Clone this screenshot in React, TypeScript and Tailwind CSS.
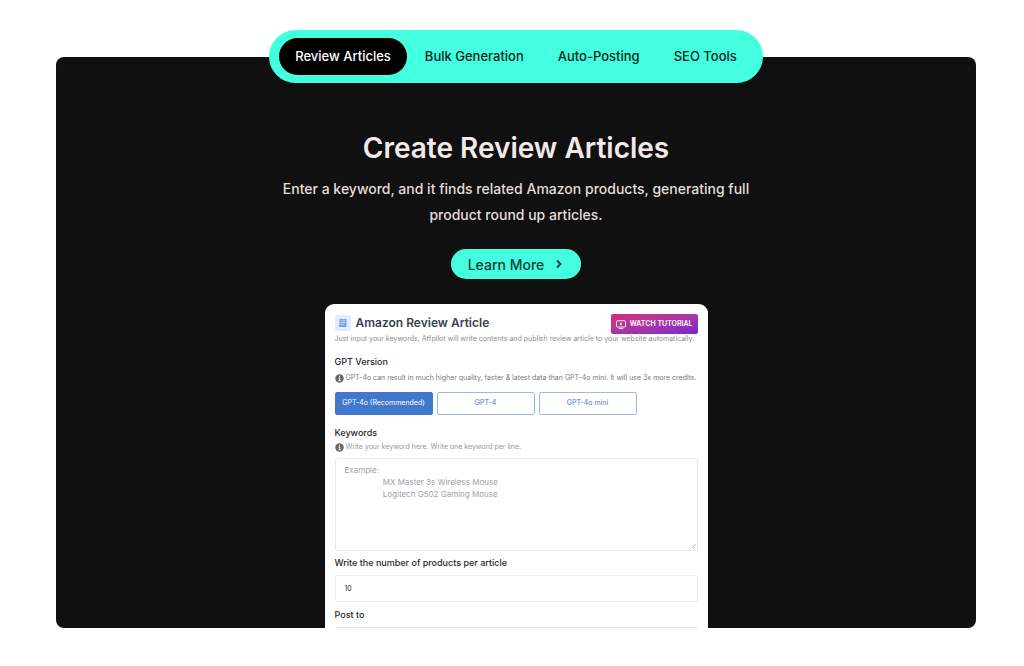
import { useState } from "react";

const tabs = ["Review Articles", "Bulk Generation", "Auto-Posting", "SEO Tools"];

const versions = ["GPT-4o (Recommended)", "GPT-4", "GPT-4o mini"];

const indent = " ".repeat(17);
const keywordsExample = `Example:\n${indent}MX Master 3s Wireless Mouse\n${indent}Logitech G502 Gaming Mouse`;

function InfoIcon() {
  return (
    <svg viewBox="0 0 16 16" className="size-[9px] shrink-0" aria-hidden>
      <circle cx="8" cy="8" r="7.5" fill="#666" />
      <path d="M8 3.2v2M6.5 7.2H8.3V12M6.2 12h4" stroke="#fff" strokeWidth="1.8" fill="none" />
    </svg>
  );
}

function DocumentIcon() {
  return (
    <svg viewBox="0 0 16 16" className="size-4 shrink-0" aria-hidden>
      <rect width="16" height="16" rx="2" fill="#dfedff" />
      <path d="M4.5 4h7v6.5a1.5 1.5 0 0 1-1.5 1.5H4v-2h.5z" fill="#7d9fe3" />
      <path d="M5.5 5.8h5M5.5 7.6h5M5.5 9.4h3" stroke="#dfedff" strokeWidth="0.7" />
    </svg>
  );
}

function VideoIcon() {
  return (
    <svg viewBox="0 0 20 18" className="h-[9px] w-2.5 shrink-0" fill="none" stroke="currentColor" strokeWidth="1.8" aria-hidden>
      <rect x="1" y="1.5" width="18" height="12.5" rx="2" />
      <path d="M5.5 16.8h9" />
      <path d="M8 4.8v6l5-3z" fill="currentColor" stroke="none" />
    </svg>
  );
}

function Tabs() {
  const [active, setActive] = useState(tabs[0]);

  return (
    <nav className="relative z-10 flex h-[53px] items-center gap-[2px] rounded-full bg-[#43ffdf] px-2.5">
      {tabs.map((tab) => (
        <button
          key={tab}
          type="button"
          onClick={() => setActive(tab)}
          className={
            tab === active
              ? "h-[37px] rounded-full bg-black px-4 text-[13px] font-medium whitespace-nowrap text-white"
              : "h-[37px] rounded-full px-4 text-[13px] font-medium whitespace-nowrap text-[#0a2722]"
          }
        >
          {tab}
        </button>
      ))}
    </nav>
  );
}

function ArticleForm() {
  const [version, setVersion] = useState(versions[0]);

  return (
    <form className="mt-[25px] max-h-[324px] w-full max-w-[383px] overflow-hidden rounded-t-[9px] bg-white px-2.5 pt-2.5 text-[#26292e]">
      <div className="flex h-5 items-center justify-between">
        <div className="flex items-center gap-[5px] pb-0.5">
          <DocumentIcon />
          <h3 className="text-[12px] leading-4 font-semibold text-[#3b414d]">Amazon Review Article</h3>
        </div>
        <button
          type="button"
          className="flex h-5 items-center gap-1 rounded-xs bg-linear-to-br from-[#d82a76] to-[#7d20d0] px-[5px] text-[7px] font-semibold whitespace-nowrap text-white"
        >
          <VideoIcon />
          WATCH TUTORIAL
        </button>
      </div>
      <p className="text-[7px] leading-[10px] whitespace-nowrap text-[#8b8e93]">
        Just input your keywords, Affpilot will write contents and publish review article to your website automatically.
      </p>

      <fieldset>
        <legend className="pt-3 text-[9px] leading-3 font-medium">GPT Version</legend>
        <p className="mt-[5px] flex items-center gap-[2px] text-[7px] leading-[10px] whitespace-nowrap text-[#777a80]">
          <InfoIcon />
          GPT-4o can result in much higher quality, faster &amp; latest data than GPT-4o mini. It will use 3x more credits.
        </p>
        <div className="mt-[9px] flex gap-1">
          {versions.map((name) => (
            <button
              key={name}
              type="button"
              onClick={() => setVersion(name)}
              className={
                name === version
                  ? "h-[23px] w-[98px] rounded-xs border border-[#3f78cc] bg-[#3f78cc] text-[7px] text-white"
                  : "h-[23px] w-[98px] rounded-xs border border-[#9db8e2] bg-white text-[7px] text-[#4478cf]"
              }
            >
              {name}
            </button>
          ))}
        </div>
      </fieldset>

      <label htmlFor="keywords" className="mt-3 block text-[9px] leading-3 font-medium">
        Keywords
      </label>
      <p className="mt-[3px] flex items-center gap-[2px] text-[7px] leading-[10px] whitespace-nowrap text-[#94979b]">
        <InfoIcon />
        Write your keyword here. Write one keyword per line.
      </p>
      <div className="relative mt-1.5">
        <textarea
          id="keywords"
          placeholder={keywordsExample}
          className="block h-[93px] w-full resize-none rounded-xs border border-[#e9e9e9] px-[9px] py-[5px] text-[8px] leading-3 placeholder:text-[#a0a2a5]"
        />
        <svg viewBox="0 0 6 6" className="absolute right-0.5 bottom-0.5 size-1.5" stroke="#999" strokeWidth="0.7" aria-hidden>
          <path d="M1 5.5 5.5 1M3.5 5.5l2-2" />
        </svg>
      </div>

      <label htmlFor="products" className="mt-1.5 block text-[9px] leading-3 font-medium">
        Write the number of products per article
      </label>
      <input
        id="products"
        type="text"
        defaultValue="10"
        className="mt-1.5 block h-[27px] w-full rounded-xs border border-[#efefef] px-[9px] text-[7px] text-[#333]"
      />

      <label htmlFor="post-to" className="mt-[7px] block text-[9px] leading-3 font-medium">
        Post to
      </label>
      <select id="post-to" className="mt-1.5 block h-[27px] w-full appearance-none rounded-xs border border-[#e2e2e2] text-[7px]" />
    </form>
  );
}

export default function App() {
  return (
    <main className="bg-white pt-[30px] pr-12 pb-[38px] pl-14 font-['Inter',sans-serif]">
      <div className="flex flex-col items-center">
        <Tabs />
        <section className="-mt-[26px] flex w-full flex-col items-center rounded-lg bg-[#101010] pt-[70px] text-center">
          <h2 className="text-[28px] leading-[42px] font-semibold text-[#f3eae8]">Create Review Articles</h2>
          <p className="mt-[7px] max-w-[490px] text-[14px] leading-[26px] font-medium text-[#e2dedb]">
            Enter a keyword, and it finds related Amazon products, generating full product round up articles.
          </p>
          <a
            href="#learn-more"
            className="mt-[21px] flex h-[30px] items-center gap-2.5 rounded-full bg-[#43ffdf] px-[17px] text-[14px] font-medium text-[#123b34]"
          >
            Learn More
            <svg viewBox="0 0 10 10" className="size-2.5" fill="none" stroke="currentColor" strokeWidth="1.8" aria-hidden>
              <path d="M3 1.5 6.5 5 3 8.5" />
            </svg>
          </a>
          <div className="flex w-full justify-center text-left">
            <ArticleForm />
          </div>
        </section>
      </div>
    </main>
  );
}
